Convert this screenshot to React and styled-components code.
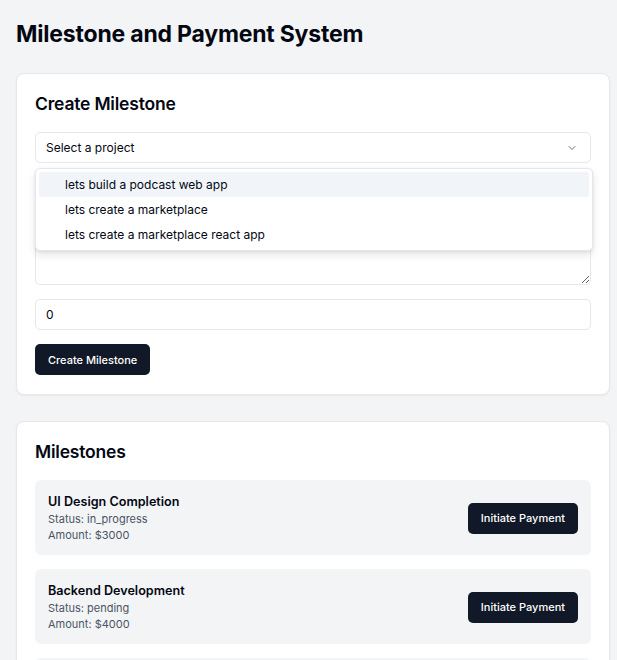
import styled, { createGlobalStyle } from 'styled-components';

const GlobalStyle = createGlobalStyle`
  * { box-sizing: border-box; }
  body {
    margin: 0;
    background: #f3f4f6;
    font-family: Inter, "Noto Sans", sans-serif;
    color: #030712;
  }
`;

const Page = styled.main`
  padding: 16px 7px 24px 16px;
`;

const Title = styled.h1`
  font-size: 23px;
  font-weight: 700;
  line-height: 36px;
  margin: 0 0 21px;
  letter-spacing: -0.2px;
`;

const Card = styled.section`
  background: #fff;
  border: 1px solid #e5e7eb;
  border-radius: 8px;
  box-shadow: 0 1px 2px rgba(0, 0, 0, 0.05);
  padding: 18px 18px 19px;
  margin-bottom: 26px;
`;

const CardTitle = styled.h2`
  font-size: 17.5px;
  font-weight: 600;
  line-height: 24px;
  margin: 0 0 16px;
  letter-spacing: -0.2px;
`;

const Form = styled.form`
  display: flex;
  flex-direction: column;
  gap: 14px;
`;

const SelectWrap = styled.div`
  position: relative;
`;

const SelectTrigger = styled.button`
  width: 100%;
  height: 31px;
  display: flex;
  align-items: center;
  justify-content: space-between;
  padding: 0 12px 0 10px;
  background: #fff;
  border: 1px solid #e5e7eb;
  border-radius: 5px;
  font: inherit;
  font-size: 12px;
  color: #030712;
  cursor: pointer;
`;

const Menu = styled.div`
  position: absolute;
  top: 36px;
  left: 0;
  right: -2px;
  z-index: 10;
  background: #fff;
  border: 1px solid #e5e7eb;
  border-radius: 5px;
  box-shadow: 0 4px 8px rgba(0, 0, 0, 0.1), 0 1px 3px rgba(0, 0, 0, 0.08);
  padding: 3px;
`;

const Option = styled.div`
  height: 25px;
  display: flex;
  align-items: center;
  padding-left: 26px;
  border-radius: 3px;
  font-size: 12px;
  color: #030712;
  background: ${(p) => (p.$active ? '#f1f5f9' : 'transparent')};
`;

const Input = styled.input`
  width: 100%;
  height: 31px;
  padding: 0 10px;
  border: 1px solid #e5e7eb;
  border-radius: 5px;
  font: inherit;
  font-size: 12px;
  color: #030712;
  background: #fff;
  outline: none;
`;

const TextArea = styled.textarea`
  width: 100%;
  height: 63px;
  padding: 7px 10px;
  border: 1px solid #e5e7eb;
  border-radius: 5px;
  font: inherit;
  font-size: 12px;
  outline: none;
  display: block;
`;

const DarkButton = styled.button`
  height: 31px;
  padding: 0 13px;
  background: #111827;
  color: #fff;
  border: none;
  border-radius: 5px;
  font: inherit;
  font-size: 11px;
  font-weight: 500;
  cursor: pointer;
  align-self: ${(p) => (p.$start ? 'flex-start' : 'center')};
  flex-shrink: 0;
`;

const List = styled.div`
  display: flex;
  flex-direction: column;
  gap: 14px;
`;

const Item = styled.div`
  display: flex;
  align-items: center;
  justify-content: space-between;
  background: #f3f4f6;
  border-radius: 6px;
  padding: 13px 13px 12px;
`;

const ItemTitle = styled.h3`
  margin: 0;
  font-size: 12.6px;
  font-weight: 600;
  line-height: 18px;
`;

const Meta = styled.p`
  margin: 0;
  font-size: 11px;
  line-height: 16px;
  color: #4b5563;
`;

const Chevron = () => (
  <svg width="12" height="12" viewBox="0 0 24 24" fill="none" stroke="#6b7280" strokeWidth="2" strokeLinecap="round" strokeLinejoin="round">
    <path d="m6 9 6 6 6-6" />
  </svg>
);

const projects = [
  'lets build a podcast web app',
  'lets create a marketplace',
  'lets create a marketplace react app',
];

const milestones = [
  { title: 'UI Design Completion', status: 'in_progress', amount: 3000 },
  { title: 'Backend Development', status: 'pending', amount: 4000 },
  { title: 'Testing and Deployment', status: 'pending', amount: 2000 },
];

const App = () => {
  return (
    <>
      <GlobalStyle />
      <Page>
        <Title>Milestone and Payment System</Title>
        <Card>
          <CardTitle>Create Milestone</CardTitle>
          <Form onSubmit={(e) => e.preventDefault()}>
            <SelectWrap>
              <SelectTrigger type="button">
                <span>Select a project</span>
                <Chevron />
              </SelectTrigger>
              <Menu>
                {projects.map((p, i) => (
                  <Option key={p} $active={i === 0}>
                    {p}
                  </Option>
                ))}
              </Menu>
            </SelectWrap>
            <Input placeholder="Milestone title" />
            <TextArea placeholder="Milestone description" />
            <Input type="number" defaultValue={0} />
            <DarkButton type="submit" $start>
              Create Milestone
            </DarkButton>
          </Form>
        </Card>
        <Card>
          <CardTitle>Milestones</CardTitle>
          <List>
            {milestones.map((m) => (
              <Item key={m.title}>
                <div>
                  <ItemTitle>{m.title}</ItemTitle>
                  <Meta>Status: {m.status}</Meta>
                  <Meta>Amount: ${m.amount}</Meta>
                </div>
                <DarkButton type="button">Initiate Payment</DarkButton>
              </Item>
            ))}
          </List>
        </Card>
      </Page>
    </>
  );
};

export default App;
